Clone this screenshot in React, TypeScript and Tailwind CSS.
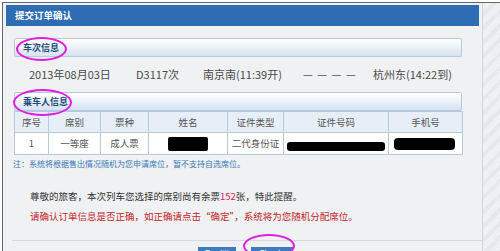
import React from 'react';

type Passenger = {
  no: string;
  seat: string;
  ticket: string;
  idType: string;
};

const passengers: Passenger[] = [{ no: '1', seat: '一等座', ticket: '成人票', idType: '二代身份证' }];

const headers = ['序号', '席别', '票种', '姓名', '证件类型', '证件号码', '手机号'];
const colWidths = ['w-[34px]', 'w-[52px]', 'w-[48px]', 'w-[79px]', 'w-[56px]', 'w-[105px]', 'w-[74px]'];

function SectionHeader({ title }: { title: string }) {
  return (
    <div className="h-[19px] w-[448px] rounded-[2px] border border-[#b7cadd] bg-gradient-to-b from-white to-[#d5e3f1] pl-2 flex items-center">
      <span className="text-[9px] font-bold text-[#1d4a78]">{title}</span>
    </div>
  );
}

function Ring({ className }: { className: string }) {
  return <div className={`absolute rounded-[50%] border-[2.5px] border-[#e01ee0] ${className}`} />;
}

export default function App() {
  return (
    <div
      className="relative w-[500px] h-[251px] overflow-hidden bg-white"
      style={{ fontFamily: '"Noto Sans CJK SC", "Noto Sans", sans-serif' }}
    >
      <div className="absolute inset-0 top-[2px] left-[2px] flex border-l border-t border-[#666]">
        <div className="w-[479px] h-full bg-[#f0f1f3] pt-[2px] pl-[3px]">
          <div className="w-[473px] h-[21px] bg-[#2e6cb4] flex items-center pl-[9px]">
            <span className="text-[9.5px] font-bold text-white">提交订单确认</span>
          </div>

          <div className="pl-[8px] pt-[12px]">
            <SectionHeader title="车次信息" />
            <div className="h-[35px] flex items-center text-[11px] text-[#4a4a4a] pb-[1px]">
              <span className="w-[122px] pl-[15px]">2013年08月03日</span>
              <span className="w-[67px]">D3117次</span>
              <span className="w-[100px]">南京南(11:39开)</span>
              <span className="w-[70px] tracking-[1px] text-[#555]">— — — —</span>
              <span>杭州东(14:22到)</span>
            </div>

            <SectionHeader title="乘车人信息" />
            <table className="table-fixed w-[448px] border-collapse text-[9.5px] text-[#555]">
              <colgroup>
                {colWidths.map((w, i) => (
                  <col key={i} className={w} />
                ))}
              </colgroup>
              <thead>
                <tr className="h-[21px] bg-[#e6eef7]">
                  {headers.map((h) => (
                    <th key={h} className="border border-[#b7cadd] font-normal text-center">
                      {h}
                    </th>
                  ))}
                </tr>
              </thead>
              <tbody>
                {passengers.map((p) => (
                  <tr key={p.no} className="h-[22px] bg-white">
                    <td className="border border-[#b7cadd] text-center">{p.no}</td>
                    <td className="border border-[#b7cadd] text-center">{p.seat}</td>
                    <td className="border border-[#b7cadd] text-center">{p.ticket}</td>
                    <td className="border border-[#b7cadd]">
                      <div className="mx-auto w-[40px] h-[14px] rounded-[2px] bg-black" />
                    </td>
                    <td className="border border-[#b7cadd] text-center">{p.idType}</td>
                    <td className="border border-[#b7cadd]">
                      <div className="ml-[3px] mt-[5px] w-[98px] h-[9px] rounded-[3px] bg-black" />
                    </td>
                    <td className="border border-[#b7cadd]">
                      <div className="ml-[5px] mt-[1px] w-[61px] h-[12px] rounded-[4px] bg-black" />
                    </td>
                  </tr>
                ))}
              </tbody>
            </table>
          </div>

          <div className="h-[18px] flex items-center pl-[7px] text-[8px] text-[#3a78b6]">
            注：系统将根据售出情况随机为您申请席位，暂不支持自选席位。
          </div>

          <div className="pl-[24px] pt-[13px] text-[9.5px] leading-[20px]">
            <p className="text-[#333]">
              尊敬的旅客，本次列车您选择的席别尚有余票<span className="text-[#d0245a]">152</span>张，特此提醒。
            </p>
            <p className="text-[#c3272b]">请确认订单信息是否正确，如正确请点击“确定”，系统将为您随机分配席位。</p>
          </div>

          <div className="mt-[14px] ml-[6px] w-[473px] border-t border-[#d6d9dd]" />
          <div className="flex justify-center gap-[15px] pt-[6px] pl-[3px]">
            <button className="w-[38px] h-[20px] bg-[#3c7bc0] text-white text-[9.5px] leading-[12px] tracking-[5px] pl-[5px] pt-[1px] flex items-start justify-center">
              取消
            </button>
            <button className="w-[42px] h-[20px] bg-[#3c7bc0] text-white text-[9.5px] leading-[12px] tracking-[5px] pl-[5px] pt-[1px] flex items-start justify-center">
              确定
            </button>
          </div>
        </div>

        <div className="flex-1 h-full border-l border-[#cfd4da] bg-[repeating-linear-gradient(135deg,#eef0f3_0px,#eef0f3_6px,#e5e8ec_6px,#e5e8ec_10px)]" />
      </div>

      <Ring className="left-[16px] top-[37px] w-[51px] h-[24px]" />
      <Ring className="left-[13px] top-[89px] w-[59px] h-[27px]" />
      <Ring className="left-[243px] top-[234px] w-[52px] h-[24px]" />
    </div>
  );
}
